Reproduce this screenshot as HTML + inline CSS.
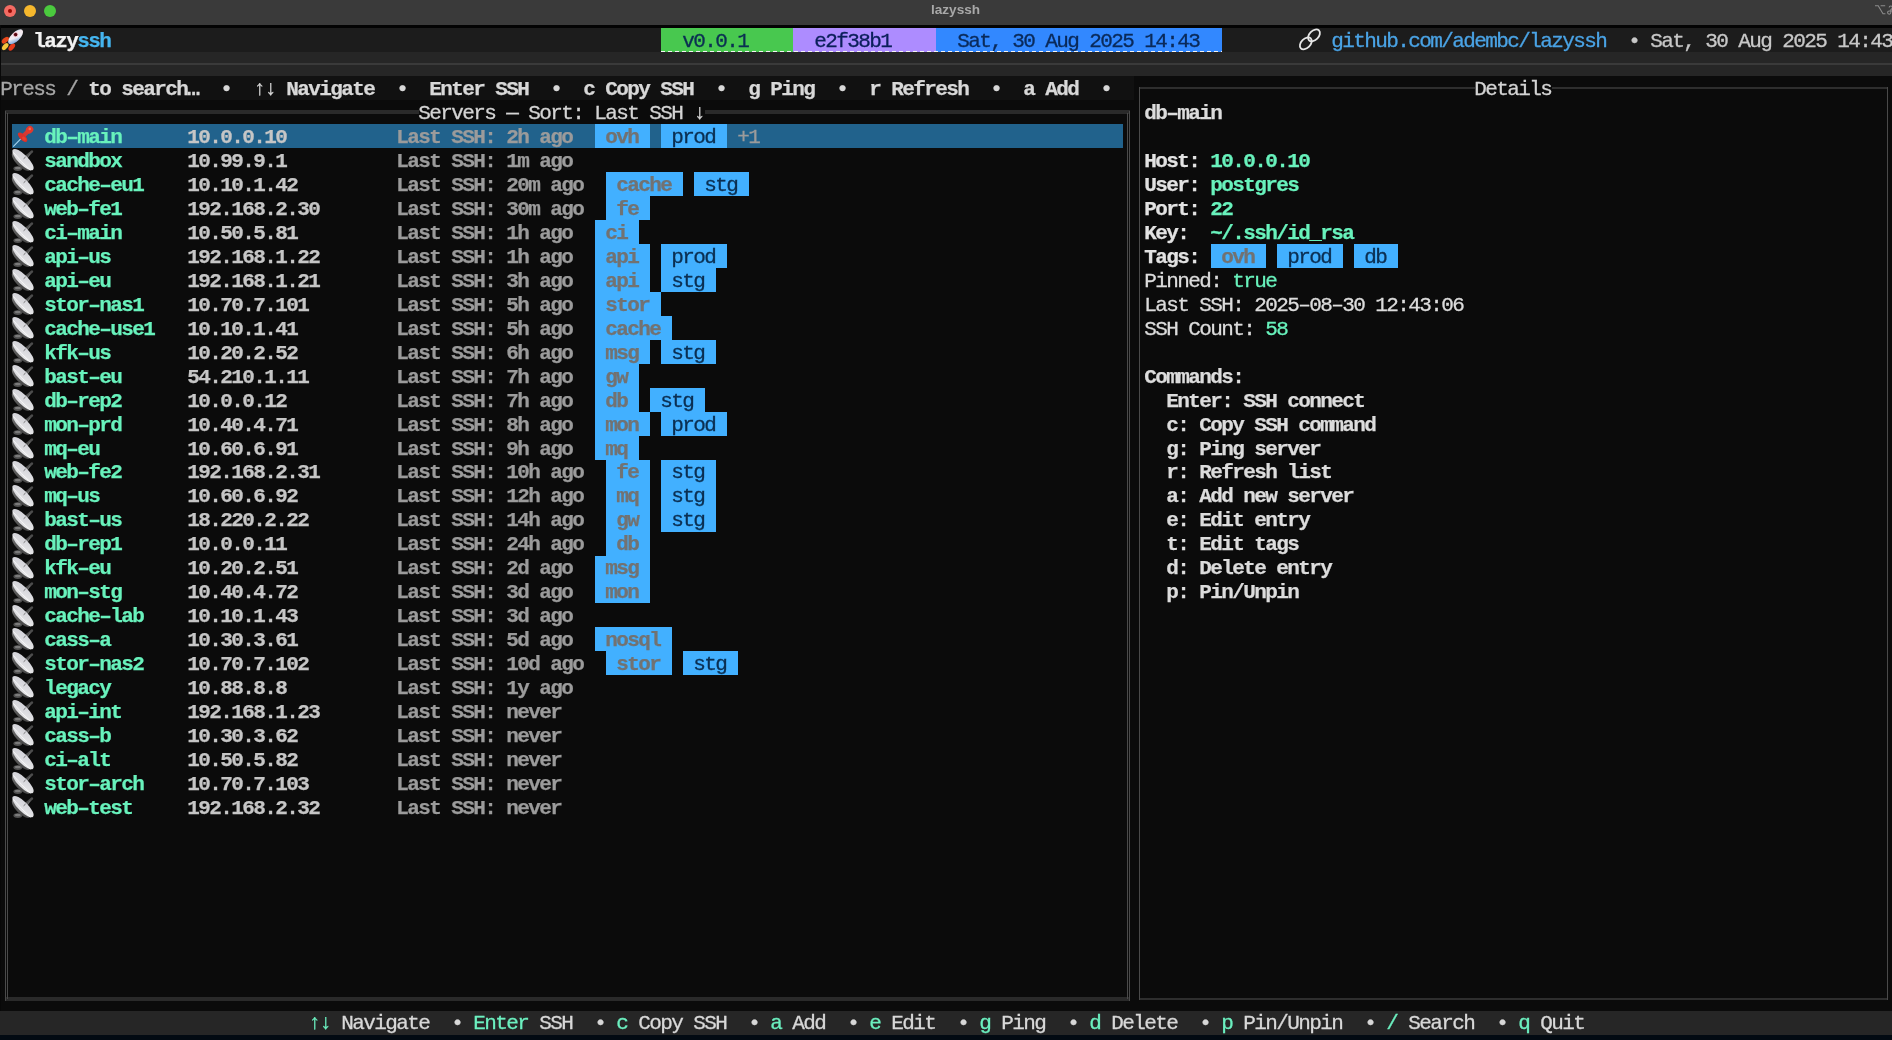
<!DOCTYPE html>
<html><head><meta charset="utf-8"><style>
html,body{margin:0;padding:0;}
body{width:1892px;height:1040px;background:#0b0b0b;position:relative;overflow:hidden;}
.b{position:absolute;}
.t{position:absolute;white-space:pre;font-family:"Liberation Mono",monospace;font-size:21px;line-height:24px;height:24px;letter-spacing:-1.6021px;-webkit-text-stroke:0.3px currentColor;}
.b7{font-weight:bold;-webkit-text-stroke:0.25px currentColor;}
.i{position:absolute;overflow:visible;}
.tl{position:absolute;top:5px;width:12px;height:12px;border-radius:6px;}
.ttl{position:absolute;left:9.5px;width:1892px;top:0.5px;text-align:center;font-family:"Liberation Sans",sans-serif;font-weight:bold;font-size:13.6px;line-height:18px;color:#a8a8a8;}
</style></head><body><div id="w" style="position:absolute;left:0;top:0;width:1892px;height:1040px;overflow:hidden;will-change:transform">
<div class="b" style="left:0.00px;top:0.00px;width:1892.00px;height:25.00px;background:#3a3a3a;"></div>
<div class="b" style="left:0.00px;top:25.00px;width:1892.00px;height:3.00px;background:#030303;"></div>
<div class="tl" style="left:4px;background:#f46b63"><i style="position:absolute;left:4px;top:4px;width:4px;height:4px;border-radius:2px;background:#990800"></i></div>
<div class="tl" style="left:24px;background:#f6b82d"></div>
<div class="tl" style="left:44px;background:#4bca3e"></div>
<div class="ttl">lazyssh</div>
<svg class="i" style="left:1874.00px;top:4.00px" width="18" height="12" viewBox="0 0 18 12"><path d="M1 1.8h3.2l4.8 8h2.4M6.6 1.8h4.6" stroke="#8c8c8c" stroke-width="1.1" fill="none"/><path d="M15.2 3.6a1.6 1.6 0 1 1 1.6 1.6h3M16.8 5.2v3.4a1.6 1.6 0 1 1 -1.6 -1.6h3" stroke="#8c8c8c" stroke-width="1.1" fill="none"/></svg>
<div class="b" style="left:0.00px;top:28.10px;width:1892.00px;height:23.98px;background:#1c1c1c;"></div>
<svg class="i" style="left:0.00px;top:29.10px" width="23" height="23" viewBox="0 0 23 23"><defs><linearGradient id="rb" x1="0" y1="1" x2="1" y2="0"><stop offset="0" stop-color="#3f82d0"/><stop offset="0.45" stop-color="#f2eef4"/><stop offset="0.75" stop-color="#f6e8ee"/><stop offset="1" stop-color="#98d2f2"/></linearGradient></defs><ellipse cx="5.3" cy="11.2" rx="4.2" ry="2.4" transform="rotate(-40 5.3 11.2)" fill="#e8481c"/><ellipse cx="11.8" cy="18" rx="4.2" ry="2.4" transform="rotate(-50 11.8 18)" fill="#e63a1a"/><ellipse cx="5.2" cy="17.6" rx="4.2" ry="2.3" transform="rotate(-50 5.2 17.6)" fill="#f6c63c"/><ellipse cx="15.6" cy="7.8" rx="9.6" ry="4.4" transform="rotate(-45 15.6 7.8)" fill="url(#rb)"/><circle cx="15.6" cy="5.6" r="2.2" fill="#5a0810" stroke="#f4c8d4" stroke-width="0.9"/></svg>
<div class="t b7" style="left:33.20px;top:30.45px;color:#f2f2f2;">lazy</div>
<div class="t b7" style="left:77.20px;top:30.45px;color:#45b5ef;">ssh</div>
<div class="b" style="left:661.00px;top:28.10px;width:132.00px;height:23.98px;background:#48c84f;"></div>
<div class="b" style="left:793.00px;top:28.10px;width:143.00px;height:23.98px;background:#ad8cff;"></div>
<div class="b" style="left:936.00px;top:28.10px;width:286.00px;height:23.98px;background:#3288ff;"></div>
<div class="t" style="left:682.20px;top:30.45px;color:#0b2f52;">v0.0.1</div>
<div class="t" style="left:814.20px;top:30.45px;color:#0b1f5a;">e2f38b1</div>
<div class="t" style="left:957.20px;top:30.45px;color:#0a2a5a;">Sat, 30 Aug 2025 14:43</div>
<div class="b" style="left:661.00px;top:50.70px;width:561.00px;height:1.20px;background:repeating-linear-gradient(90deg,#f4f4f4 0 4px,transparent 4px 7px);"></div>
<svg class="i" style="left:1299.00px;top:28.10px" width="22" height="24" viewBox="0 0 22 24"><g fill="none" stroke="#e6e6e6" stroke-width="1.8"><ellipse cx="15" cy="7.4" rx="7" ry="4.6" transform="rotate(-45 15 7.4)"/><ellipse cx="6.8" cy="15.4" rx="7" ry="4.6" transform="rotate(-45 6.8 15.4)"/></g></svg>
<div class="t" style="left:1331.20px;top:30.45px;color:#4aa3e5;">github.com/adembc/lazyssh</div>
<div class="t" style="left:1628.20px;top:30.45px;color:#c8c8c8;">•</div>
<div class="t" style="left:1650.20px;top:30.45px;color:#c8c8c8;">Sat, 30 Aug 2025 14:43</div>
<div class="b" style="left:0.00px;top:52.08px;width:1892.00px;height:23.98px;background:#262626;"></div>
<div class="b" style="left:0.00px;top:62.98px;width:1892.00px;height:2.00px;background:#3a3a3a;"></div>
<div class="b" style="left:1.00px;top:76.05px;width:1133.00px;height:23.98px;background:#111111;"></div>
<div class="t" style="left:0.20px;top:78.34px;color:#a6a6a6;">Press / </div>
<div class="t b7" style="left:88.20px;top:78.34px;color:#d8d8d8;">to search…</div>
<div class="t b7" style="left:220.20px;top:78.34px;color:#d8d8d8;">•</div>
<div class="t b7" style="left:253.20px;top:78.34px;color:#d8d8d8;">↑↓ Navigate</div>
<div class="t b7" style="left:396.20px;top:78.34px;color:#d8d8d8;">•</div>
<div class="t b7" style="left:429.20px;top:78.34px;color:#d8d8d8;">Enter SSH</div>
<div class="t b7" style="left:550.20px;top:78.34px;color:#d8d8d8;">•</div>
<div class="t b7" style="left:583.20px;top:78.34px;color:#d8d8d8;">c Copy SSH</div>
<div class="t b7" style="left:715.20px;top:78.34px;color:#d8d8d8;">•</div>
<div class="t b7" style="left:748.20px;top:78.34px;color:#d8d8d8;">g Ping</div>
<div class="t b7" style="left:836.20px;top:78.34px;color:#d8d8d8;">•</div>
<div class="t b7" style="left:869.20px;top:78.34px;color:#d8d8d8;">r Refresh</div>
<div class="t b7" style="left:990.20px;top:78.34px;color:#d8d8d8;">•</div>
<div class="t b7" style="left:1023.20px;top:78.34px;color:#d8d8d8;">a Add</div>
<div class="t b7" style="left:1100.20px;top:78.34px;color:#d8d8d8;">•</div>
<div class="b" style="left:5.00px;top:110.01px;width:1125.00px;height:4.00px;background:#2a2a2a;"></div>
<div class="b" style="left:5.00px;top:997.09px;width:1125.00px;height:4.00px;background:#2a2a2a;"></div>
<div class="b" style="left:5.00px;top:110.51px;width:1.20px;height:890.07px;background:#4a4a4a;"></div>
<div class="b" style="left:7.10px;top:112.51px;width:1.20px;height:886.07px;background:#4a4a4a;"></div>
<div class="b" style="left:1126.80px;top:112.51px;width:1.20px;height:886.07px;background:#4a4a4a;"></div>
<div class="b" style="left:1128.90px;top:110.51px;width:1.20px;height:890.07px;background:#4a4a4a;"></div>
<div class="b" style="left:419.00px;top:100.03px;width:286.00px;height:23.98px;background:#0b0b0b;"></div>
<div class="t" style="left:418.20px;top:102.29px;color:#d4d4d4;">Servers — Sort: Last SSH ↓</div>
<div class="b" style="left:1138.70px;top:87.04px;width:749.60px;height:2.00px;background:#2e2e2e;"></div>
<div class="b" style="left:1138.70px;top:998.09px;width:749.60px;height:2.00px;background:#2e2e2e;"></div>
<div class="b" style="left:1138.70px;top:87.04px;width:1.60px;height:913.05px;background:#4a4a4a;"></div>
<div class="b" style="left:1886.70px;top:87.04px;width:1.60px;height:913.05px;background:#4a4a4a;"></div>
<div class="b" style="left:1475.00px;top:76.05px;width:77.00px;height:23.98px;background:#0b0b0b;"></div>
<div class="t" style="left:1474.20px;top:78.34px;color:#d4d4d4;">Details</div>
<div class="b" style="left:12.00px;top:124.00px;width:1111.00px;height:23.98px;background:#21628c;"></div>
<svg class="i" style="left:12.00px;top:124.00px" width="22" height="24" viewBox="0 0 22 24"><path d="M9.2 14.3 L1.2 22.6" stroke="#a8d6f2" stroke-width="1.1" fill="none"/><path d="M11.5 11.8 L16 7.3" stroke="#d23a34" stroke-width="4.2" stroke-linecap="round"/><ellipse cx="10.6" cy="13.2" rx="6.1" ry="2.8" transform="rotate(45 10.6 13.2)" fill="#d8302a"/><ellipse cx="17.6" cy="5.7" rx="3.9" ry="3.5" transform="rotate(-45 17.6 5.7)" fill="#e2382c"/><circle cx="17.8" cy="4.9" r="1.3" fill="#ff6e50" opacity="0.9"/><ellipse cx="12" cy="14.6" rx="2.4" ry="1.5" transform="rotate(45 12 14.6)" fill="#e8402c"/></svg>
<div class="t b7" style="left:44.20px;top:126.23px;color:#68f2bc;">db–main</div>
<div class="t b7" style="left:187.20px;top:126.23px;color:#c6c6c6;">10.0.0.10</div>
<div class="t b7" style="left:396.20px;top:126.23px;color:#9b9b9b;">Last SSH: 2h ago</div>
<div class="b" style="left:595.00px;top:124.00px;width:55.00px;height:23.98px;background:#42b0ff;"></div>
<div class="t b7" style="left:605.20px;top:126.23px;color:#727272;">ovh</div>
<div class="b" style="left:661.00px;top:124.00px;width:66.00px;height:23.98px;background:#42b0ff;"></div>
<div class="t" style="left:671.20px;top:126.23px;color:#0b2f52;">prod</div>
<div class="t" style="left:737.20px;top:126.23px;color:#9b9b9b;">+1</div>
<svg class="i" style="left:12.00px;top:147.97px" width="22" height="24" viewBox="0 0 22 24"><defs><linearGradient id="dg" x1="0" y1="0" x2="1" y2="1"><stop offset="0" stop-color="#cfcfd6"/><stop offset="0.5" stop-color="#dcdce0"/><stop offset="1" stop-color="#ececec"/></linearGradient><linearGradient id="db" x1="0" y1="0" x2="1" y2="1"><stop offset="0" stop-color="#8a8a8a"/><stop offset="1" stop-color="#3a3a3a"/></linearGradient></defs><g transform="translate(-1 0)"><ellipse cx="6.8" cy="20.6" rx="4.4" ry="2.3" fill="#505050"/><ellipse cx="6.8" cy="20" rx="3" ry="1.2" fill="#7a7a7a"/><path d="M14 9.5 L21 3.5" stroke="#4c4c4c" stroke-width="2.4" stroke-linecap="round"/><path d="M15.5 11 L19 6" stroke="#6a6a6a" stroke-width="1.2" stroke-linecap="round"/><ellipse cx="10.5" cy="13.3" rx="12.5" ry="5.4" transform="rotate(45 10.5 13.3)" fill="url(#db)"/><ellipse cx="12" cy="11.6" rx="14.2" ry="4.9" transform="rotate(45 12 11.6)" fill="url(#dg)"/><path d="M2.2 4.2 Q10 13.5 19.5 22.3" stroke="#fafafa" stroke-width="1" fill="none" opacity="0.85"/><path d="M12.6 10.8 L14.6 9" stroke="#555" stroke-width="1" opacity="0.8"/></g></svg>
<div class="t b7" style="left:44.20px;top:150.17px;color:#68f2bc;">sandbox</div>
<div class="t b7" style="left:187.20px;top:150.17px;color:#c6c6c6;">10.99.9.1</div>
<div class="t b7" style="left:396.20px;top:150.17px;color:#9b9b9b;">Last SSH: 1m ago</div>
<svg class="i" style="left:12.00px;top:171.95px" width="22" height="24" viewBox="0 0 22 24"><defs><linearGradient id="dg" x1="0" y1="0" x2="1" y2="1"><stop offset="0" stop-color="#cfcfd6"/><stop offset="0.5" stop-color="#dcdce0"/><stop offset="1" stop-color="#ececec"/></linearGradient><linearGradient id="db" x1="0" y1="0" x2="1" y2="1"><stop offset="0" stop-color="#8a8a8a"/><stop offset="1" stop-color="#3a3a3a"/></linearGradient></defs><g transform="translate(-1 0)"><ellipse cx="6.8" cy="20.6" rx="4.4" ry="2.3" fill="#505050"/><ellipse cx="6.8" cy="20" rx="3" ry="1.2" fill="#7a7a7a"/><path d="M14 9.5 L21 3.5" stroke="#4c4c4c" stroke-width="2.4" stroke-linecap="round"/><path d="M15.5 11 L19 6" stroke="#6a6a6a" stroke-width="1.2" stroke-linecap="round"/><ellipse cx="10.5" cy="13.3" rx="12.5" ry="5.4" transform="rotate(45 10.5 13.3)" fill="url(#db)"/><ellipse cx="12" cy="11.6" rx="14.2" ry="4.9" transform="rotate(45 12 11.6)" fill="url(#dg)"/><path d="M2.2 4.2 Q10 13.5 19.5 22.3" stroke="#fafafa" stroke-width="1" fill="none" opacity="0.85"/><path d="M12.6 10.8 L14.6 9" stroke="#555" stroke-width="1" opacity="0.8"/></g></svg>
<div class="t b7" style="left:44.20px;top:174.12px;color:#68f2bc;">cache–eu1</div>
<div class="t b7" style="left:187.20px;top:174.12px;color:#c6c6c6;">10.10.1.42</div>
<div class="t b7" style="left:396.20px;top:174.12px;color:#9b9b9b;">Last SSH: 20m ago</div>
<div class="b" style="left:606.00px;top:171.95px;width:77.00px;height:23.98px;background:#42b0ff;"></div>
<div class="t b7" style="left:616.20px;top:174.12px;color:#727272;">cache</div>
<div class="b" style="left:694.00px;top:171.95px;width:55.00px;height:23.98px;background:#42b0ff;"></div>
<div class="t" style="left:704.20px;top:174.12px;color:#0b2f52;">stg</div>
<svg class="i" style="left:12.00px;top:195.93px" width="22" height="24" viewBox="0 0 22 24"><defs><linearGradient id="dg" x1="0" y1="0" x2="1" y2="1"><stop offset="0" stop-color="#cfcfd6"/><stop offset="0.5" stop-color="#dcdce0"/><stop offset="1" stop-color="#ececec"/></linearGradient><linearGradient id="db" x1="0" y1="0" x2="1" y2="1"><stop offset="0" stop-color="#8a8a8a"/><stop offset="1" stop-color="#3a3a3a"/></linearGradient></defs><g transform="translate(-1 0)"><ellipse cx="6.8" cy="20.6" rx="4.4" ry="2.3" fill="#505050"/><ellipse cx="6.8" cy="20" rx="3" ry="1.2" fill="#7a7a7a"/><path d="M14 9.5 L21 3.5" stroke="#4c4c4c" stroke-width="2.4" stroke-linecap="round"/><path d="M15.5 11 L19 6" stroke="#6a6a6a" stroke-width="1.2" stroke-linecap="round"/><ellipse cx="10.5" cy="13.3" rx="12.5" ry="5.4" transform="rotate(45 10.5 13.3)" fill="url(#db)"/><ellipse cx="12" cy="11.6" rx="14.2" ry="4.9" transform="rotate(45 12 11.6)" fill="url(#dg)"/><path d="M2.2 4.2 Q10 13.5 19.5 22.3" stroke="#fafafa" stroke-width="1" fill="none" opacity="0.85"/><path d="M12.6 10.8 L14.6 9" stroke="#555" stroke-width="1" opacity="0.8"/></g></svg>
<div class="t b7" style="left:44.20px;top:198.06px;color:#68f2bc;">web–fe1</div>
<div class="t b7" style="left:187.20px;top:198.06px;color:#c6c6c6;">192.168.2.30</div>
<div class="t b7" style="left:396.20px;top:198.06px;color:#9b9b9b;">Last SSH: 30m ago</div>
<div class="b" style="left:606.00px;top:195.93px;width:44.00px;height:23.98px;background:#42b0ff;"></div>
<div class="t b7" style="left:616.20px;top:198.06px;color:#727272;">fe</div>
<svg class="i" style="left:12.00px;top:219.90px" width="22" height="24" viewBox="0 0 22 24"><defs><linearGradient id="dg" x1="0" y1="0" x2="1" y2="1"><stop offset="0" stop-color="#cfcfd6"/><stop offset="0.5" stop-color="#dcdce0"/><stop offset="1" stop-color="#ececec"/></linearGradient><linearGradient id="db" x1="0" y1="0" x2="1" y2="1"><stop offset="0" stop-color="#8a8a8a"/><stop offset="1" stop-color="#3a3a3a"/></linearGradient></defs><g transform="translate(-1 0)"><ellipse cx="6.8" cy="20.6" rx="4.4" ry="2.3" fill="#505050"/><ellipse cx="6.8" cy="20" rx="3" ry="1.2" fill="#7a7a7a"/><path d="M14 9.5 L21 3.5" stroke="#4c4c4c" stroke-width="2.4" stroke-linecap="round"/><path d="M15.5 11 L19 6" stroke="#6a6a6a" stroke-width="1.2" stroke-linecap="round"/><ellipse cx="10.5" cy="13.3" rx="12.5" ry="5.4" transform="rotate(45 10.5 13.3)" fill="url(#db)"/><ellipse cx="12" cy="11.6" rx="14.2" ry="4.9" transform="rotate(45 12 11.6)" fill="url(#dg)"/><path d="M2.2 4.2 Q10 13.5 19.5 22.3" stroke="#fafafa" stroke-width="1" fill="none" opacity="0.85"/><path d="M12.6 10.8 L14.6 9" stroke="#555" stroke-width="1" opacity="0.8"/></g></svg>
<div class="t b7" style="left:44.20px;top:222.01px;color:#68f2bc;">ci–main</div>
<div class="t b7" style="left:187.20px;top:222.01px;color:#c6c6c6;">10.50.5.81</div>
<div class="t b7" style="left:396.20px;top:222.01px;color:#9b9b9b;">Last SSH: 1h ago</div>
<div class="b" style="left:595.00px;top:219.90px;width:44.00px;height:23.98px;background:#42b0ff;"></div>
<div class="t b7" style="left:605.20px;top:222.01px;color:#727272;">ci</div>
<svg class="i" style="left:12.00px;top:243.88px" width="22" height="24" viewBox="0 0 22 24"><defs><linearGradient id="dg" x1="0" y1="0" x2="1" y2="1"><stop offset="0" stop-color="#cfcfd6"/><stop offset="0.5" stop-color="#dcdce0"/><stop offset="1" stop-color="#ececec"/></linearGradient><linearGradient id="db" x1="0" y1="0" x2="1" y2="1"><stop offset="0" stop-color="#8a8a8a"/><stop offset="1" stop-color="#3a3a3a"/></linearGradient></defs><g transform="translate(-1 0)"><ellipse cx="6.8" cy="20.6" rx="4.4" ry="2.3" fill="#505050"/><ellipse cx="6.8" cy="20" rx="3" ry="1.2" fill="#7a7a7a"/><path d="M14 9.5 L21 3.5" stroke="#4c4c4c" stroke-width="2.4" stroke-linecap="round"/><path d="M15.5 11 L19 6" stroke="#6a6a6a" stroke-width="1.2" stroke-linecap="round"/><ellipse cx="10.5" cy="13.3" rx="12.5" ry="5.4" transform="rotate(45 10.5 13.3)" fill="url(#db)"/><ellipse cx="12" cy="11.6" rx="14.2" ry="4.9" transform="rotate(45 12 11.6)" fill="url(#dg)"/><path d="M2.2 4.2 Q10 13.5 19.5 22.3" stroke="#fafafa" stroke-width="1" fill="none" opacity="0.85"/><path d="M12.6 10.8 L14.6 9" stroke="#555" stroke-width="1" opacity="0.8"/></g></svg>
<div class="t b7" style="left:44.20px;top:245.95px;color:#68f2bc;">api–us</div>
<div class="t b7" style="left:187.20px;top:245.95px;color:#c6c6c6;">192.168.1.22</div>
<div class="t b7" style="left:396.20px;top:245.95px;color:#9b9b9b;">Last SSH: 1h ago</div>
<div class="b" style="left:595.00px;top:243.88px;width:55.00px;height:23.98px;background:#42b0ff;"></div>
<div class="t b7" style="left:605.20px;top:245.95px;color:#727272;">api</div>
<div class="b" style="left:661.00px;top:243.88px;width:66.00px;height:23.98px;background:#42b0ff;"></div>
<div class="t" style="left:671.20px;top:245.95px;color:#0b2f52;">prod</div>
<svg class="i" style="left:12.00px;top:267.85px" width="22" height="24" viewBox="0 0 22 24"><defs><linearGradient id="dg" x1="0" y1="0" x2="1" y2="1"><stop offset="0" stop-color="#cfcfd6"/><stop offset="0.5" stop-color="#dcdce0"/><stop offset="1" stop-color="#ececec"/></linearGradient><linearGradient id="db" x1="0" y1="0" x2="1" y2="1"><stop offset="0" stop-color="#8a8a8a"/><stop offset="1" stop-color="#3a3a3a"/></linearGradient></defs><g transform="translate(-1 0)"><ellipse cx="6.8" cy="20.6" rx="4.4" ry="2.3" fill="#505050"/><ellipse cx="6.8" cy="20" rx="3" ry="1.2" fill="#7a7a7a"/><path d="M14 9.5 L21 3.5" stroke="#4c4c4c" stroke-width="2.4" stroke-linecap="round"/><path d="M15.5 11 L19 6" stroke="#6a6a6a" stroke-width="1.2" stroke-linecap="round"/><ellipse cx="10.5" cy="13.3" rx="12.5" ry="5.4" transform="rotate(45 10.5 13.3)" fill="url(#db)"/><ellipse cx="12" cy="11.6" rx="14.2" ry="4.9" transform="rotate(45 12 11.6)" fill="url(#dg)"/><path d="M2.2 4.2 Q10 13.5 19.5 22.3" stroke="#fafafa" stroke-width="1" fill="none" opacity="0.85"/><path d="M12.6 10.8 L14.6 9" stroke="#555" stroke-width="1" opacity="0.8"/></g></svg>
<div class="t b7" style="left:44.20px;top:269.90px;color:#68f2bc;">api–eu</div>
<div class="t b7" style="left:187.20px;top:269.90px;color:#c6c6c6;">192.168.1.21</div>
<div class="t b7" style="left:396.20px;top:269.90px;color:#9b9b9b;">Last SSH: 3h ago</div>
<div class="b" style="left:595.00px;top:267.85px;width:55.00px;height:23.98px;background:#42b0ff;"></div>
<div class="t b7" style="left:605.20px;top:269.90px;color:#727272;">api</div>
<div class="b" style="left:661.00px;top:267.85px;width:55.00px;height:23.98px;background:#42b0ff;"></div>
<div class="t" style="left:671.20px;top:269.90px;color:#0b2f52;">stg</div>
<svg class="i" style="left:12.00px;top:291.83px" width="22" height="24" viewBox="0 0 22 24"><defs><linearGradient id="dg" x1="0" y1="0" x2="1" y2="1"><stop offset="0" stop-color="#cfcfd6"/><stop offset="0.5" stop-color="#dcdce0"/><stop offset="1" stop-color="#ececec"/></linearGradient><linearGradient id="db" x1="0" y1="0" x2="1" y2="1"><stop offset="0" stop-color="#8a8a8a"/><stop offset="1" stop-color="#3a3a3a"/></linearGradient></defs><g transform="translate(-1 0)"><ellipse cx="6.8" cy="20.6" rx="4.4" ry="2.3" fill="#505050"/><ellipse cx="6.8" cy="20" rx="3" ry="1.2" fill="#7a7a7a"/><path d="M14 9.5 L21 3.5" stroke="#4c4c4c" stroke-width="2.4" stroke-linecap="round"/><path d="M15.5 11 L19 6" stroke="#6a6a6a" stroke-width="1.2" stroke-linecap="round"/><ellipse cx="10.5" cy="13.3" rx="12.5" ry="5.4" transform="rotate(45 10.5 13.3)" fill="url(#db)"/><ellipse cx="12" cy="11.6" rx="14.2" ry="4.9" transform="rotate(45 12 11.6)" fill="url(#dg)"/><path d="M2.2 4.2 Q10 13.5 19.5 22.3" stroke="#fafafa" stroke-width="1" fill="none" opacity="0.85"/><path d="M12.6 10.8 L14.6 9" stroke="#555" stroke-width="1" opacity="0.8"/></g></svg>
<div class="t b7" style="left:44.20px;top:293.85px;color:#68f2bc;">stor–nas1</div>
<div class="t b7" style="left:187.20px;top:293.85px;color:#c6c6c6;">10.70.7.101</div>
<div class="t b7" style="left:396.20px;top:293.85px;color:#9b9b9b;">Last SSH: 5h ago</div>
<div class="b" style="left:595.00px;top:291.83px;width:66.00px;height:23.98px;background:#42b0ff;"></div>
<div class="t b7" style="left:605.20px;top:293.85px;color:#727272;">stor</div>
<svg class="i" style="left:12.00px;top:315.80px" width="22" height="24" viewBox="0 0 22 24"><defs><linearGradient id="dg" x1="0" y1="0" x2="1" y2="1"><stop offset="0" stop-color="#cfcfd6"/><stop offset="0.5" stop-color="#dcdce0"/><stop offset="1" stop-color="#ececec"/></linearGradient><linearGradient id="db" x1="0" y1="0" x2="1" y2="1"><stop offset="0" stop-color="#8a8a8a"/><stop offset="1" stop-color="#3a3a3a"/></linearGradient></defs><g transform="translate(-1 0)"><ellipse cx="6.8" cy="20.6" rx="4.4" ry="2.3" fill="#505050"/><ellipse cx="6.8" cy="20" rx="3" ry="1.2" fill="#7a7a7a"/><path d="M14 9.5 L21 3.5" stroke="#4c4c4c" stroke-width="2.4" stroke-linecap="round"/><path d="M15.5 11 L19 6" stroke="#6a6a6a" stroke-width="1.2" stroke-linecap="round"/><ellipse cx="10.5" cy="13.3" rx="12.5" ry="5.4" transform="rotate(45 10.5 13.3)" fill="url(#db)"/><ellipse cx="12" cy="11.6" rx="14.2" ry="4.9" transform="rotate(45 12 11.6)" fill="url(#dg)"/><path d="M2.2 4.2 Q10 13.5 19.5 22.3" stroke="#fafafa" stroke-width="1" fill="none" opacity="0.85"/><path d="M12.6 10.8 L14.6 9" stroke="#555" stroke-width="1" opacity="0.8"/></g></svg>
<div class="t b7" style="left:44.20px;top:317.79px;color:#68f2bc;">cache–use1</div>
<div class="t b7" style="left:187.20px;top:317.79px;color:#c6c6c6;">10.10.1.41</div>
<div class="t b7" style="left:396.20px;top:317.79px;color:#9b9b9b;">Last SSH: 5h ago</div>
<div class="b" style="left:595.00px;top:315.80px;width:77.00px;height:23.98px;background:#42b0ff;"></div>
<div class="t b7" style="left:605.20px;top:317.79px;color:#727272;">cache</div>
<svg class="i" style="left:12.00px;top:339.78px" width="22" height="24" viewBox="0 0 22 24"><defs><linearGradient id="dg" x1="0" y1="0" x2="1" y2="1"><stop offset="0" stop-color="#cfcfd6"/><stop offset="0.5" stop-color="#dcdce0"/><stop offset="1" stop-color="#ececec"/></linearGradient><linearGradient id="db" x1="0" y1="0" x2="1" y2="1"><stop offset="0" stop-color="#8a8a8a"/><stop offset="1" stop-color="#3a3a3a"/></linearGradient></defs><g transform="translate(-1 0)"><ellipse cx="6.8" cy="20.6" rx="4.4" ry="2.3" fill="#505050"/><ellipse cx="6.8" cy="20" rx="3" ry="1.2" fill="#7a7a7a"/><path d="M14 9.5 L21 3.5" stroke="#4c4c4c" stroke-width="2.4" stroke-linecap="round"/><path d="M15.5 11 L19 6" stroke="#6a6a6a" stroke-width="1.2" stroke-linecap="round"/><ellipse cx="10.5" cy="13.3" rx="12.5" ry="5.4" transform="rotate(45 10.5 13.3)" fill="url(#db)"/><ellipse cx="12" cy="11.6" rx="14.2" ry="4.9" transform="rotate(45 12 11.6)" fill="url(#dg)"/><path d="M2.2 4.2 Q10 13.5 19.5 22.3" stroke="#fafafa" stroke-width="1" fill="none" opacity="0.85"/><path d="M12.6 10.8 L14.6 9" stroke="#555" stroke-width="1" opacity="0.8"/></g></svg>
<div class="t b7" style="left:44.20px;top:341.74px;color:#68f2bc;">kfk–us</div>
<div class="t b7" style="left:187.20px;top:341.74px;color:#c6c6c6;">10.20.2.52</div>
<div class="t b7" style="left:396.20px;top:341.74px;color:#9b9b9b;">Last SSH: 6h ago</div>
<div class="b" style="left:595.00px;top:339.78px;width:55.00px;height:23.98px;background:#42b0ff;"></div>
<div class="t b7" style="left:605.20px;top:341.74px;color:#727272;">msg</div>
<div class="b" style="left:661.00px;top:339.78px;width:55.00px;height:23.98px;background:#42b0ff;"></div>
<div class="t" style="left:671.20px;top:341.74px;color:#0b2f52;">stg</div>
<svg class="i" style="left:12.00px;top:363.75px" width="22" height="24" viewBox="0 0 22 24"><defs><linearGradient id="dg" x1="0" y1="0" x2="1" y2="1"><stop offset="0" stop-color="#cfcfd6"/><stop offset="0.5" stop-color="#dcdce0"/><stop offset="1" stop-color="#ececec"/></linearGradient><linearGradient id="db" x1="0" y1="0" x2="1" y2="1"><stop offset="0" stop-color="#8a8a8a"/><stop offset="1" stop-color="#3a3a3a"/></linearGradient></defs><g transform="translate(-1 0)"><ellipse cx="6.8" cy="20.6" rx="4.4" ry="2.3" fill="#505050"/><ellipse cx="6.8" cy="20" rx="3" ry="1.2" fill="#7a7a7a"/><path d="M14 9.5 L21 3.5" stroke="#4c4c4c" stroke-width="2.4" stroke-linecap="round"/><path d="M15.5 11 L19 6" stroke="#6a6a6a" stroke-width="1.2" stroke-linecap="round"/><ellipse cx="10.5" cy="13.3" rx="12.5" ry="5.4" transform="rotate(45 10.5 13.3)" fill="url(#db)"/><ellipse cx="12" cy="11.6" rx="14.2" ry="4.9" transform="rotate(45 12 11.6)" fill="url(#dg)"/><path d="M2.2 4.2 Q10 13.5 19.5 22.3" stroke="#fafafa" stroke-width="1" fill="none" opacity="0.85"/><path d="M12.6 10.8 L14.6 9" stroke="#555" stroke-width="1" opacity="0.8"/></g></svg>
<div class="t b7" style="left:44.20px;top:365.68px;color:#68f2bc;">bast–eu</div>
<div class="t b7" style="left:187.20px;top:365.68px;color:#c6c6c6;">54.210.1.11</div>
<div class="t b7" style="left:396.20px;top:365.68px;color:#9b9b9b;">Last SSH: 7h ago</div>
<div class="b" style="left:595.00px;top:363.75px;width:44.00px;height:23.98px;background:#42b0ff;"></div>
<div class="t b7" style="left:605.20px;top:365.68px;color:#727272;">gw</div>
<svg class="i" style="left:12.00px;top:387.73px" width="22" height="24" viewBox="0 0 22 24"><defs><linearGradient id="dg" x1="0" y1="0" x2="1" y2="1"><stop offset="0" stop-color="#cfcfd6"/><stop offset="0.5" stop-color="#dcdce0"/><stop offset="1" stop-color="#ececec"/></linearGradient><linearGradient id="db" x1="0" y1="0" x2="1" y2="1"><stop offset="0" stop-color="#8a8a8a"/><stop offset="1" stop-color="#3a3a3a"/></linearGradient></defs><g transform="translate(-1 0)"><ellipse cx="6.8" cy="20.6" rx="4.4" ry="2.3" fill="#505050"/><ellipse cx="6.8" cy="20" rx="3" ry="1.2" fill="#7a7a7a"/><path d="M14 9.5 L21 3.5" stroke="#4c4c4c" stroke-width="2.4" stroke-linecap="round"/><path d="M15.5 11 L19 6" stroke="#6a6a6a" stroke-width="1.2" stroke-linecap="round"/><ellipse cx="10.5" cy="13.3" rx="12.5" ry="5.4" transform="rotate(45 10.5 13.3)" fill="url(#db)"/><ellipse cx="12" cy="11.6" rx="14.2" ry="4.9" transform="rotate(45 12 11.6)" fill="url(#dg)"/><path d="M2.2 4.2 Q10 13.5 19.5 22.3" stroke="#fafafa" stroke-width="1" fill="none" opacity="0.85"/><path d="M12.6 10.8 L14.6 9" stroke="#555" stroke-width="1" opacity="0.8"/></g></svg>
<div class="t b7" style="left:44.20px;top:389.62px;color:#68f2bc;">db–rep2</div>
<div class="t b7" style="left:187.20px;top:389.62px;color:#c6c6c6;">10.0.0.12</div>
<div class="t b7" style="left:396.20px;top:389.62px;color:#9b9b9b;">Last SSH: 7h ago</div>
<div class="b" style="left:595.00px;top:387.73px;width:44.00px;height:23.98px;background:#42b0ff;"></div>
<div class="t b7" style="left:605.20px;top:389.62px;color:#727272;">db</div>
<div class="b" style="left:650.00px;top:387.73px;width:55.00px;height:23.98px;background:#42b0ff;"></div>
<div class="t" style="left:660.20px;top:389.62px;color:#0b2f52;">stg</div>
<svg class="i" style="left:12.00px;top:411.70px" width="22" height="24" viewBox="0 0 22 24"><defs><linearGradient id="dg" x1="0" y1="0" x2="1" y2="1"><stop offset="0" stop-color="#cfcfd6"/><stop offset="0.5" stop-color="#dcdce0"/><stop offset="1" stop-color="#ececec"/></linearGradient><linearGradient id="db" x1="0" y1="0" x2="1" y2="1"><stop offset="0" stop-color="#8a8a8a"/><stop offset="1" stop-color="#3a3a3a"/></linearGradient></defs><g transform="translate(-1 0)"><ellipse cx="6.8" cy="20.6" rx="4.4" ry="2.3" fill="#505050"/><ellipse cx="6.8" cy="20" rx="3" ry="1.2" fill="#7a7a7a"/><path d="M14 9.5 L21 3.5" stroke="#4c4c4c" stroke-width="2.4" stroke-linecap="round"/><path d="M15.5 11 L19 6" stroke="#6a6a6a" stroke-width="1.2" stroke-linecap="round"/><ellipse cx="10.5" cy="13.3" rx="12.5" ry="5.4" transform="rotate(45 10.5 13.3)" fill="url(#db)"/><ellipse cx="12" cy="11.6" rx="14.2" ry="4.9" transform="rotate(45 12 11.6)" fill="url(#dg)"/><path d="M2.2 4.2 Q10 13.5 19.5 22.3" stroke="#fafafa" stroke-width="1" fill="none" opacity="0.85"/><path d="M12.6 10.8 L14.6 9" stroke="#555" stroke-width="1" opacity="0.8"/></g></svg>
<div class="t b7" style="left:44.20px;top:413.57px;color:#68f2bc;">mon–prd</div>
<div class="t b7" style="left:187.20px;top:413.57px;color:#c6c6c6;">10.40.4.71</div>
<div class="t b7" style="left:396.20px;top:413.57px;color:#9b9b9b;">Last SSH: 8h ago</div>
<div class="b" style="left:595.00px;top:411.70px;width:55.00px;height:23.98px;background:#42b0ff;"></div>
<div class="t b7" style="left:605.20px;top:413.57px;color:#727272;">mon</div>
<div class="b" style="left:661.00px;top:411.70px;width:66.00px;height:23.98px;background:#42b0ff;"></div>
<div class="t" style="left:671.20px;top:413.57px;color:#0b2f52;">prod</div>
<svg class="i" style="left:12.00px;top:435.68px" width="22" height="24" viewBox="0 0 22 24"><defs><linearGradient id="dg" x1="0" y1="0" x2="1" y2="1"><stop offset="0" stop-color="#cfcfd6"/><stop offset="0.5" stop-color="#dcdce0"/><stop offset="1" stop-color="#ececec"/></linearGradient><linearGradient id="db" x1="0" y1="0" x2="1" y2="1"><stop offset="0" stop-color="#8a8a8a"/><stop offset="1" stop-color="#3a3a3a"/></linearGradient></defs><g transform="translate(-1 0)"><ellipse cx="6.8" cy="20.6" rx="4.4" ry="2.3" fill="#505050"/><ellipse cx="6.8" cy="20" rx="3" ry="1.2" fill="#7a7a7a"/><path d="M14 9.5 L21 3.5" stroke="#4c4c4c" stroke-width="2.4" stroke-linecap="round"/><path d="M15.5 11 L19 6" stroke="#6a6a6a" stroke-width="1.2" stroke-linecap="round"/><ellipse cx="10.5" cy="13.3" rx="12.5" ry="5.4" transform="rotate(45 10.5 13.3)" fill="url(#db)"/><ellipse cx="12" cy="11.6" rx="14.2" ry="4.9" transform="rotate(45 12 11.6)" fill="url(#dg)"/><path d="M2.2 4.2 Q10 13.5 19.5 22.3" stroke="#fafafa" stroke-width="1" fill="none" opacity="0.85"/><path d="M12.6 10.8 L14.6 9" stroke="#555" stroke-width="1" opacity="0.8"/></g></svg>
<div class="t b7" style="left:44.20px;top:437.52px;color:#68f2bc;">mq–eu</div>
<div class="t b7" style="left:187.20px;top:437.52px;color:#c6c6c6;">10.60.6.91</div>
<div class="t b7" style="left:396.20px;top:437.52px;color:#9b9b9b;">Last SSH: 9h ago</div>
<div class="b" style="left:595.00px;top:435.68px;width:44.00px;height:23.98px;background:#42b0ff;"></div>
<div class="t b7" style="left:605.20px;top:437.52px;color:#727272;">mq</div>
<svg class="i" style="left:12.00px;top:459.65px" width="22" height="24" viewBox="0 0 22 24"><defs><linearGradient id="dg" x1="0" y1="0" x2="1" y2="1"><stop offset="0" stop-color="#cfcfd6"/><stop offset="0.5" stop-color="#dcdce0"/><stop offset="1" stop-color="#ececec"/></linearGradient><linearGradient id="db" x1="0" y1="0" x2="1" y2="1"><stop offset="0" stop-color="#8a8a8a"/><stop offset="1" stop-color="#3a3a3a"/></linearGradient></defs><g transform="translate(-1 0)"><ellipse cx="6.8" cy="20.6" rx="4.4" ry="2.3" fill="#505050"/><ellipse cx="6.8" cy="20" rx="3" ry="1.2" fill="#7a7a7a"/><path d="M14 9.5 L21 3.5" stroke="#4c4c4c" stroke-width="2.4" stroke-linecap="round"/><path d="M15.5 11 L19 6" stroke="#6a6a6a" stroke-width="1.2" stroke-linecap="round"/><ellipse cx="10.5" cy="13.3" rx="12.5" ry="5.4" transform="rotate(45 10.5 13.3)" fill="url(#db)"/><ellipse cx="12" cy="11.6" rx="14.2" ry="4.9" transform="rotate(45 12 11.6)" fill="url(#dg)"/><path d="M2.2 4.2 Q10 13.5 19.5 22.3" stroke="#fafafa" stroke-width="1" fill="none" opacity="0.85"/><path d="M12.6 10.8 L14.6 9" stroke="#555" stroke-width="1" opacity="0.8"/></g></svg>
<div class="t b7" style="left:44.20px;top:461.46px;color:#68f2bc;">web–fe2</div>
<div class="t b7" style="left:187.20px;top:461.46px;color:#c6c6c6;">192.168.2.31</div>
<div class="t b7" style="left:396.20px;top:461.46px;color:#9b9b9b;">Last SSH: 10h ago</div>
<div class="b" style="left:606.00px;top:459.65px;width:44.00px;height:23.98px;background:#42b0ff;"></div>
<div class="t b7" style="left:616.20px;top:461.46px;color:#727272;">fe</div>
<div class="b" style="left:661.00px;top:459.65px;width:55.00px;height:23.98px;background:#42b0ff;"></div>
<div class="t" style="left:671.20px;top:461.46px;color:#0b2f52;">stg</div>
<svg class="i" style="left:12.00px;top:483.63px" width="22" height="24" viewBox="0 0 22 24"><defs><linearGradient id="dg" x1="0" y1="0" x2="1" y2="1"><stop offset="0" stop-color="#cfcfd6"/><stop offset="0.5" stop-color="#dcdce0"/><stop offset="1" stop-color="#ececec"/></linearGradient><linearGradient id="db" x1="0" y1="0" x2="1" y2="1"><stop offset="0" stop-color="#8a8a8a"/><stop offset="1" stop-color="#3a3a3a"/></linearGradient></defs><g transform="translate(-1 0)"><ellipse cx="6.8" cy="20.6" rx="4.4" ry="2.3" fill="#505050"/><ellipse cx="6.8" cy="20" rx="3" ry="1.2" fill="#7a7a7a"/><path d="M14 9.5 L21 3.5" stroke="#4c4c4c" stroke-width="2.4" stroke-linecap="round"/><path d="M15.5 11 L19 6" stroke="#6a6a6a" stroke-width="1.2" stroke-linecap="round"/><ellipse cx="10.5" cy="13.3" rx="12.5" ry="5.4" transform="rotate(45 10.5 13.3)" fill="url(#db)"/><ellipse cx="12" cy="11.6" rx="14.2" ry="4.9" transform="rotate(45 12 11.6)" fill="url(#dg)"/><path d="M2.2 4.2 Q10 13.5 19.5 22.3" stroke="#fafafa" stroke-width="1" fill="none" opacity="0.85"/><path d="M12.6 10.8 L14.6 9" stroke="#555" stroke-width="1" opacity="0.8"/></g></svg>
<div class="t b7" style="left:44.20px;top:485.41px;color:#68f2bc;">mq–us</div>
<div class="t b7" style="left:187.20px;top:485.41px;color:#c6c6c6;">10.60.6.92</div>
<div class="t b7" style="left:396.20px;top:485.41px;color:#9b9b9b;">Last SSH: 12h ago</div>
<div class="b" style="left:606.00px;top:483.63px;width:44.00px;height:23.98px;background:#42b0ff;"></div>
<div class="t b7" style="left:616.20px;top:485.41px;color:#727272;">mq</div>
<div class="b" style="left:661.00px;top:483.63px;width:55.00px;height:23.98px;background:#42b0ff;"></div>
<div class="t" style="left:671.20px;top:485.41px;color:#0b2f52;">stg</div>
<svg class="i" style="left:12.00px;top:507.60px" width="22" height="24" viewBox="0 0 22 24"><defs><linearGradient id="dg" x1="0" y1="0" x2="1" y2="1"><stop offset="0" stop-color="#cfcfd6"/><stop offset="0.5" stop-color="#dcdce0"/><stop offset="1" stop-color="#ececec"/></linearGradient><linearGradient id="db" x1="0" y1="0" x2="1" y2="1"><stop offset="0" stop-color="#8a8a8a"/><stop offset="1" stop-color="#3a3a3a"/></linearGradient></defs><g transform="translate(-1 0)"><ellipse cx="6.8" cy="20.6" rx="4.4" ry="2.3" fill="#505050"/><ellipse cx="6.8" cy="20" rx="3" ry="1.2" fill="#7a7a7a"/><path d="M14 9.5 L21 3.5" stroke="#4c4c4c" stroke-width="2.4" stroke-linecap="round"/><path d="M15.5 11 L19 6" stroke="#6a6a6a" stroke-width="1.2" stroke-linecap="round"/><ellipse cx="10.5" cy="13.3" rx="12.5" ry="5.4" transform="rotate(45 10.5 13.3)" fill="url(#db)"/><ellipse cx="12" cy="11.6" rx="14.2" ry="4.9" transform="rotate(45 12 11.6)" fill="url(#dg)"/><path d="M2.2 4.2 Q10 13.5 19.5 22.3" stroke="#fafafa" stroke-width="1" fill="none" opacity="0.85"/><path d="M12.6 10.8 L14.6 9" stroke="#555" stroke-width="1" opacity="0.8"/></g></svg>
<div class="t b7" style="left:44.20px;top:509.35px;color:#68f2bc;">bast–us</div>
<div class="t b7" style="left:187.20px;top:509.35px;color:#c6c6c6;">18.220.2.22</div>
<div class="t b7" style="left:396.20px;top:509.35px;color:#9b9b9b;">Last SSH: 14h ago</div>
<div class="b" style="left:606.00px;top:507.60px;width:44.00px;height:23.98px;background:#42b0ff;"></div>
<div class="t b7" style="left:616.20px;top:509.35px;color:#727272;">gw</div>
<div class="b" style="left:661.00px;top:507.60px;width:55.00px;height:23.98px;background:#42b0ff;"></div>
<div class="t" style="left:671.20px;top:509.35px;color:#0b2f52;">stg</div>
<svg class="i" style="left:12.00px;top:531.58px" width="22" height="24" viewBox="0 0 22 24"><defs><linearGradient id="dg" x1="0" y1="0" x2="1" y2="1"><stop offset="0" stop-color="#cfcfd6"/><stop offset="0.5" stop-color="#dcdce0"/><stop offset="1" stop-color="#ececec"/></linearGradient><linearGradient id="db" x1="0" y1="0" x2="1" y2="1"><stop offset="0" stop-color="#8a8a8a"/><stop offset="1" stop-color="#3a3a3a"/></linearGradient></defs><g transform="translate(-1 0)"><ellipse cx="6.8" cy="20.6" rx="4.4" ry="2.3" fill="#505050"/><ellipse cx="6.8" cy="20" rx="3" ry="1.2" fill="#7a7a7a"/><path d="M14 9.5 L21 3.5" stroke="#4c4c4c" stroke-width="2.4" stroke-linecap="round"/><path d="M15.5 11 L19 6" stroke="#6a6a6a" stroke-width="1.2" stroke-linecap="round"/><ellipse cx="10.5" cy="13.3" rx="12.5" ry="5.4" transform="rotate(45 10.5 13.3)" fill="url(#db)"/><ellipse cx="12" cy="11.6" rx="14.2" ry="4.9" transform="rotate(45 12 11.6)" fill="url(#dg)"/><path d="M2.2 4.2 Q10 13.5 19.5 22.3" stroke="#fafafa" stroke-width="1" fill="none" opacity="0.85"/><path d="M12.6 10.8 L14.6 9" stroke="#555" stroke-width="1" opacity="0.8"/></g></svg>
<div class="t b7" style="left:44.20px;top:533.30px;color:#68f2bc;">db–rep1</div>
<div class="t b7" style="left:187.20px;top:533.30px;color:#c6c6c6;">10.0.0.11</div>
<div class="t b7" style="left:396.20px;top:533.30px;color:#9b9b9b;">Last SSH: 24h ago</div>
<div class="b" style="left:606.00px;top:531.58px;width:44.00px;height:23.98px;background:#42b0ff;"></div>
<div class="t b7" style="left:616.20px;top:533.30px;color:#727272;">db</div>
<svg class="i" style="left:12.00px;top:555.55px" width="22" height="24" viewBox="0 0 22 24"><defs><linearGradient id="dg" x1="0" y1="0" x2="1" y2="1"><stop offset="0" stop-color="#cfcfd6"/><stop offset="0.5" stop-color="#dcdce0"/><stop offset="1" stop-color="#ececec"/></linearGradient><linearGradient id="db" x1="0" y1="0" x2="1" y2="1"><stop offset="0" stop-color="#8a8a8a"/><stop offset="1" stop-color="#3a3a3a"/></linearGradient></defs><g transform="translate(-1 0)"><ellipse cx="6.8" cy="20.6" rx="4.4" ry="2.3" fill="#505050"/><ellipse cx="6.8" cy="20" rx="3" ry="1.2" fill="#7a7a7a"/><path d="M14 9.5 L21 3.5" stroke="#4c4c4c" stroke-width="2.4" stroke-linecap="round"/><path d="M15.5 11 L19 6" stroke="#6a6a6a" stroke-width="1.2" stroke-linecap="round"/><ellipse cx="10.5" cy="13.3" rx="12.5" ry="5.4" transform="rotate(45 10.5 13.3)" fill="url(#db)"/><ellipse cx="12" cy="11.6" rx="14.2" ry="4.9" transform="rotate(45 12 11.6)" fill="url(#dg)"/><path d="M2.2 4.2 Q10 13.5 19.5 22.3" stroke="#fafafa" stroke-width="1" fill="none" opacity="0.85"/><path d="M12.6 10.8 L14.6 9" stroke="#555" stroke-width="1" opacity="0.8"/></g></svg>
<div class="t b7" style="left:44.20px;top:557.24px;color:#68f2bc;">kfk–eu</div>
<div class="t b7" style="left:187.20px;top:557.24px;color:#c6c6c6;">10.20.2.51</div>
<div class="t b7" style="left:396.20px;top:557.24px;color:#9b9b9b;">Last SSH: 2d ago</div>
<div class="b" style="left:595.00px;top:555.55px;width:55.00px;height:23.98px;background:#42b0ff;"></div>
<div class="t b7" style="left:605.20px;top:557.24px;color:#727272;">msg</div>
<svg class="i" style="left:12.00px;top:579.53px" width="22" height="24" viewBox="0 0 22 24"><defs><linearGradient id="dg" x1="0" y1="0" x2="1" y2="1"><stop offset="0" stop-color="#cfcfd6"/><stop offset="0.5" stop-color="#dcdce0"/><stop offset="1" stop-color="#ececec"/></linearGradient><linearGradient id="db" x1="0" y1="0" x2="1" y2="1"><stop offset="0" stop-color="#8a8a8a"/><stop offset="1" stop-color="#3a3a3a"/></linearGradient></defs><g transform="translate(-1 0)"><ellipse cx="6.8" cy="20.6" rx="4.4" ry="2.3" fill="#505050"/><ellipse cx="6.8" cy="20" rx="3" ry="1.2" fill="#7a7a7a"/><path d="M14 9.5 L21 3.5" stroke="#4c4c4c" stroke-width="2.4" stroke-linecap="round"/><path d="M15.5 11 L19 6" stroke="#6a6a6a" stroke-width="1.2" stroke-linecap="round"/><ellipse cx="10.5" cy="13.3" rx="12.5" ry="5.4" transform="rotate(45 10.5 13.3)" fill="url(#db)"/><ellipse cx="12" cy="11.6" rx="14.2" ry="4.9" transform="rotate(45 12 11.6)" fill="url(#dg)"/><path d="M2.2 4.2 Q10 13.5 19.5 22.3" stroke="#fafafa" stroke-width="1" fill="none" opacity="0.85"/><path d="M12.6 10.8 L14.6 9" stroke="#555" stroke-width="1" opacity="0.8"/></g></svg>
<div class="t b7" style="left:44.20px;top:581.19px;color:#68f2bc;">mon–stg</div>
<div class="t b7" style="left:187.20px;top:581.19px;color:#c6c6c6;">10.40.4.72</div>
<div class="t b7" style="left:396.20px;top:581.19px;color:#9b9b9b;">Last SSH: 3d ago</div>
<div class="b" style="left:595.00px;top:579.53px;width:55.00px;height:23.98px;background:#42b0ff;"></div>
<div class="t b7" style="left:605.20px;top:581.19px;color:#727272;">mon</div>
<svg class="i" style="left:12.00px;top:603.50px" width="22" height="24" viewBox="0 0 22 24"><defs><linearGradient id="dg" x1="0" y1="0" x2="1" y2="1"><stop offset="0" stop-color="#cfcfd6"/><stop offset="0.5" stop-color="#dcdce0"/><stop offset="1" stop-color="#ececec"/></linearGradient><linearGradient id="db" x1="0" y1="0" x2="1" y2="1"><stop offset="0" stop-color="#8a8a8a"/><stop offset="1" stop-color="#3a3a3a"/></linearGradient></defs><g transform="translate(-1 0)"><ellipse cx="6.8" cy="20.6" rx="4.4" ry="2.3" fill="#505050"/><ellipse cx="6.8" cy="20" rx="3" ry="1.2" fill="#7a7a7a"/><path d="M14 9.5 L21 3.5" stroke="#4c4c4c" stroke-width="2.4" stroke-linecap="round"/><path d="M15.5 11 L19 6" stroke="#6a6a6a" stroke-width="1.2" stroke-linecap="round"/><ellipse cx="10.5" cy="13.3" rx="12.5" ry="5.4" transform="rotate(45 10.5 13.3)" fill="url(#db)"/><ellipse cx="12" cy="11.6" rx="14.2" ry="4.9" transform="rotate(45 12 11.6)" fill="url(#dg)"/><path d="M2.2 4.2 Q10 13.5 19.5 22.3" stroke="#fafafa" stroke-width="1" fill="none" opacity="0.85"/><path d="M12.6 10.8 L14.6 9" stroke="#555" stroke-width="1" opacity="0.8"/></g></svg>
<div class="t b7" style="left:44.20px;top:605.13px;color:#68f2bc;">cache–lab</div>
<div class="t b7" style="left:187.20px;top:605.13px;color:#c6c6c6;">10.10.1.43</div>
<div class="t b7" style="left:396.20px;top:605.13px;color:#9b9b9b;">Last SSH: 3d ago</div>
<svg class="i" style="left:12.00px;top:627.48px" width="22" height="24" viewBox="0 0 22 24"><defs><linearGradient id="dg" x1="0" y1="0" x2="1" y2="1"><stop offset="0" stop-color="#cfcfd6"/><stop offset="0.5" stop-color="#dcdce0"/><stop offset="1" stop-color="#ececec"/></linearGradient><linearGradient id="db" x1="0" y1="0" x2="1" y2="1"><stop offset="0" stop-color="#8a8a8a"/><stop offset="1" stop-color="#3a3a3a"/></linearGradient></defs><g transform="translate(-1 0)"><ellipse cx="6.8" cy="20.6" rx="4.4" ry="2.3" fill="#505050"/><ellipse cx="6.8" cy="20" rx="3" ry="1.2" fill="#7a7a7a"/><path d="M14 9.5 L21 3.5" stroke="#4c4c4c" stroke-width="2.4" stroke-linecap="round"/><path d="M15.5 11 L19 6" stroke="#6a6a6a" stroke-width="1.2" stroke-linecap="round"/><ellipse cx="10.5" cy="13.3" rx="12.5" ry="5.4" transform="rotate(45 10.5 13.3)" fill="url(#db)"/><ellipse cx="12" cy="11.6" rx="14.2" ry="4.9" transform="rotate(45 12 11.6)" fill="url(#dg)"/><path d="M2.2 4.2 Q10 13.5 19.5 22.3" stroke="#fafafa" stroke-width="1" fill="none" opacity="0.85"/><path d="M12.6 10.8 L14.6 9" stroke="#555" stroke-width="1" opacity="0.8"/></g></svg>
<div class="t b7" style="left:44.20px;top:629.08px;color:#68f2bc;">cass–a</div>
<div class="t b7" style="left:187.20px;top:629.08px;color:#c6c6c6;">10.30.3.61</div>
<div class="t b7" style="left:396.20px;top:629.08px;color:#9b9b9b;">Last SSH: 5d ago</div>
<div class="b" style="left:595.00px;top:627.48px;width:77.00px;height:23.98px;background:#42b0ff;"></div>
<div class="t b7" style="left:605.20px;top:629.08px;color:#727272;">nosql</div>
<svg class="i" style="left:12.00px;top:651.45px" width="22" height="24" viewBox="0 0 22 24"><defs><linearGradient id="dg" x1="0" y1="0" x2="1" y2="1"><stop offset="0" stop-color="#cfcfd6"/><stop offset="0.5" stop-color="#dcdce0"/><stop offset="1" stop-color="#ececec"/></linearGradient><linearGradient id="db" x1="0" y1="0" x2="1" y2="1"><stop offset="0" stop-color="#8a8a8a"/><stop offset="1" stop-color="#3a3a3a"/></linearGradient></defs><g transform="translate(-1 0)"><ellipse cx="6.8" cy="20.6" rx="4.4" ry="2.3" fill="#505050"/><ellipse cx="6.8" cy="20" rx="3" ry="1.2" fill="#7a7a7a"/><path d="M14 9.5 L21 3.5" stroke="#4c4c4c" stroke-width="2.4" stroke-linecap="round"/><path d="M15.5 11 L19 6" stroke="#6a6a6a" stroke-width="1.2" stroke-linecap="round"/><ellipse cx="10.5" cy="13.3" rx="12.5" ry="5.4" transform="rotate(45 10.5 13.3)" fill="url(#db)"/><ellipse cx="12" cy="11.6" rx="14.2" ry="4.9" transform="rotate(45 12 11.6)" fill="url(#dg)"/><path d="M2.2 4.2 Q10 13.5 19.5 22.3" stroke="#fafafa" stroke-width="1" fill="none" opacity="0.85"/><path d="M12.6 10.8 L14.6 9" stroke="#555" stroke-width="1" opacity="0.8"/></g></svg>
<div class="t b7" style="left:44.20px;top:653.02px;color:#68f2bc;">stor–nas2</div>
<div class="t b7" style="left:187.20px;top:653.02px;color:#c6c6c6;">10.70.7.102</div>
<div class="t b7" style="left:396.20px;top:653.02px;color:#9b9b9b;">Last SSH: 10d ago</div>
<div class="b" style="left:606.00px;top:651.45px;width:66.00px;height:23.98px;background:#42b0ff;"></div>
<div class="t b7" style="left:616.20px;top:653.02px;color:#727272;">stor</div>
<div class="b" style="left:683.00px;top:651.45px;width:55.00px;height:23.98px;background:#42b0ff;"></div>
<div class="t" style="left:693.20px;top:653.02px;color:#0b2f52;">stg</div>
<svg class="i" style="left:12.00px;top:675.43px" width="22" height="24" viewBox="0 0 22 24"><defs><linearGradient id="dg" x1="0" y1="0" x2="1" y2="1"><stop offset="0" stop-color="#cfcfd6"/><stop offset="0.5" stop-color="#dcdce0"/><stop offset="1" stop-color="#ececec"/></linearGradient><linearGradient id="db" x1="0" y1="0" x2="1" y2="1"><stop offset="0" stop-color="#8a8a8a"/><stop offset="1" stop-color="#3a3a3a"/></linearGradient></defs><g transform="translate(-1 0)"><ellipse cx="6.8" cy="20.6" rx="4.4" ry="2.3" fill="#505050"/><ellipse cx="6.8" cy="20" rx="3" ry="1.2" fill="#7a7a7a"/><path d="M14 9.5 L21 3.5" stroke="#4c4c4c" stroke-width="2.4" stroke-linecap="round"/><path d="M15.5 11 L19 6" stroke="#6a6a6a" stroke-width="1.2" stroke-linecap="round"/><ellipse cx="10.5" cy="13.3" rx="12.5" ry="5.4" transform="rotate(45 10.5 13.3)" fill="url(#db)"/><ellipse cx="12" cy="11.6" rx="14.2" ry="4.9" transform="rotate(45 12 11.6)" fill="url(#dg)"/><path d="M2.2 4.2 Q10 13.5 19.5 22.3" stroke="#fafafa" stroke-width="1" fill="none" opacity="0.85"/><path d="M12.6 10.8 L14.6 9" stroke="#555" stroke-width="1" opacity="0.8"/></g></svg>
<div class="t b7" style="left:44.20px;top:676.97px;color:#68f2bc;">legacy</div>
<div class="t b7" style="left:187.20px;top:676.97px;color:#c6c6c6;">10.88.8.8</div>
<div class="t b7" style="left:396.20px;top:676.97px;color:#9b9b9b;">Last SSH: 1y ago</div>
<svg class="i" style="left:12.00px;top:699.40px" width="22" height="24" viewBox="0 0 22 24"><defs><linearGradient id="dg" x1="0" y1="0" x2="1" y2="1"><stop offset="0" stop-color="#cfcfd6"/><stop offset="0.5" stop-color="#dcdce0"/><stop offset="1" stop-color="#ececec"/></linearGradient><linearGradient id="db" x1="0" y1="0" x2="1" y2="1"><stop offset="0" stop-color="#8a8a8a"/><stop offset="1" stop-color="#3a3a3a"/></linearGradient></defs><g transform="translate(-1 0)"><ellipse cx="6.8" cy="20.6" rx="4.4" ry="2.3" fill="#505050"/><ellipse cx="6.8" cy="20" rx="3" ry="1.2" fill="#7a7a7a"/><path d="M14 9.5 L21 3.5" stroke="#4c4c4c" stroke-width="2.4" stroke-linecap="round"/><path d="M15.5 11 L19 6" stroke="#6a6a6a" stroke-width="1.2" stroke-linecap="round"/><ellipse cx="10.5" cy="13.3" rx="12.5" ry="5.4" transform="rotate(45 10.5 13.3)" fill="url(#db)"/><ellipse cx="12" cy="11.6" rx="14.2" ry="4.9" transform="rotate(45 12 11.6)" fill="url(#dg)"/><path d="M2.2 4.2 Q10 13.5 19.5 22.3" stroke="#fafafa" stroke-width="1" fill="none" opacity="0.85"/><path d="M12.6 10.8 L14.6 9" stroke="#555" stroke-width="1" opacity="0.8"/></g></svg>
<div class="t b7" style="left:44.20px;top:700.91px;color:#68f2bc;">api–int</div>
<div class="t b7" style="left:187.20px;top:700.91px;color:#c6c6c6;">192.168.1.23</div>
<div class="t b7" style="left:396.20px;top:700.91px;color:#9b9b9b;">Last SSH: never</div>
<svg class="i" style="left:12.00px;top:723.38px" width="22" height="24" viewBox="0 0 22 24"><defs><linearGradient id="dg" x1="0" y1="0" x2="1" y2="1"><stop offset="0" stop-color="#cfcfd6"/><stop offset="0.5" stop-color="#dcdce0"/><stop offset="1" stop-color="#ececec"/></linearGradient><linearGradient id="db" x1="0" y1="0" x2="1" y2="1"><stop offset="0" stop-color="#8a8a8a"/><stop offset="1" stop-color="#3a3a3a"/></linearGradient></defs><g transform="translate(-1 0)"><ellipse cx="6.8" cy="20.6" rx="4.4" ry="2.3" fill="#505050"/><ellipse cx="6.8" cy="20" rx="3" ry="1.2" fill="#7a7a7a"/><path d="M14 9.5 L21 3.5" stroke="#4c4c4c" stroke-width="2.4" stroke-linecap="round"/><path d="M15.5 11 L19 6" stroke="#6a6a6a" stroke-width="1.2" stroke-linecap="round"/><ellipse cx="10.5" cy="13.3" rx="12.5" ry="5.4" transform="rotate(45 10.5 13.3)" fill="url(#db)"/><ellipse cx="12" cy="11.6" rx="14.2" ry="4.9" transform="rotate(45 12 11.6)" fill="url(#dg)"/><path d="M2.2 4.2 Q10 13.5 19.5 22.3" stroke="#fafafa" stroke-width="1" fill="none" opacity="0.85"/><path d="M12.6 10.8 L14.6 9" stroke="#555" stroke-width="1" opacity="0.8"/></g></svg>
<div class="t b7" style="left:44.20px;top:724.86px;color:#68f2bc;">cass–b</div>
<div class="t b7" style="left:187.20px;top:724.86px;color:#c6c6c6;">10.30.3.62</div>
<div class="t b7" style="left:396.20px;top:724.86px;color:#9b9b9b;">Last SSH: never</div>
<svg class="i" style="left:12.00px;top:747.35px" width="22" height="24" viewBox="0 0 22 24"><defs><linearGradient id="dg" x1="0" y1="0" x2="1" y2="1"><stop offset="0" stop-color="#cfcfd6"/><stop offset="0.5" stop-color="#dcdce0"/><stop offset="1" stop-color="#ececec"/></linearGradient><linearGradient id="db" x1="0" y1="0" x2="1" y2="1"><stop offset="0" stop-color="#8a8a8a"/><stop offset="1" stop-color="#3a3a3a"/></linearGradient></defs><g transform="translate(-1 0)"><ellipse cx="6.8" cy="20.6" rx="4.4" ry="2.3" fill="#505050"/><ellipse cx="6.8" cy="20" rx="3" ry="1.2" fill="#7a7a7a"/><path d="M14 9.5 L21 3.5" stroke="#4c4c4c" stroke-width="2.4" stroke-linecap="round"/><path d="M15.5 11 L19 6" stroke="#6a6a6a" stroke-width="1.2" stroke-linecap="round"/><ellipse cx="10.5" cy="13.3" rx="12.5" ry="5.4" transform="rotate(45 10.5 13.3)" fill="url(#db)"/><ellipse cx="12" cy="11.6" rx="14.2" ry="4.9" transform="rotate(45 12 11.6)" fill="url(#dg)"/><path d="M2.2 4.2 Q10 13.5 19.5 22.3" stroke="#fafafa" stroke-width="1" fill="none" opacity="0.85"/><path d="M12.6 10.8 L14.6 9" stroke="#555" stroke-width="1" opacity="0.8"/></g></svg>
<div class="t b7" style="left:44.20px;top:748.80px;color:#68f2bc;">ci–alt</div>
<div class="t b7" style="left:187.20px;top:748.80px;color:#c6c6c6;">10.50.5.82</div>
<div class="t b7" style="left:396.20px;top:748.80px;color:#9b9b9b;">Last SSH: never</div>
<svg class="i" style="left:12.00px;top:771.33px" width="22" height="24" viewBox="0 0 22 24"><defs><linearGradient id="dg" x1="0" y1="0" x2="1" y2="1"><stop offset="0" stop-color="#cfcfd6"/><stop offset="0.5" stop-color="#dcdce0"/><stop offset="1" stop-color="#ececec"/></linearGradient><linearGradient id="db" x1="0" y1="0" x2="1" y2="1"><stop offset="0" stop-color="#8a8a8a"/><stop offset="1" stop-color="#3a3a3a"/></linearGradient></defs><g transform="translate(-1 0)"><ellipse cx="6.8" cy="20.6" rx="4.4" ry="2.3" fill="#505050"/><ellipse cx="6.8" cy="20" rx="3" ry="1.2" fill="#7a7a7a"/><path d="M14 9.5 L21 3.5" stroke="#4c4c4c" stroke-width="2.4" stroke-linecap="round"/><path d="M15.5 11 L19 6" stroke="#6a6a6a" stroke-width="1.2" stroke-linecap="round"/><ellipse cx="10.5" cy="13.3" rx="12.5" ry="5.4" transform="rotate(45 10.5 13.3)" fill="url(#db)"/><ellipse cx="12" cy="11.6" rx="14.2" ry="4.9" transform="rotate(45 12 11.6)" fill="url(#dg)"/><path d="M2.2 4.2 Q10 13.5 19.5 22.3" stroke="#fafafa" stroke-width="1" fill="none" opacity="0.85"/><path d="M12.6 10.8 L14.6 9" stroke="#555" stroke-width="1" opacity="0.8"/></g></svg>
<div class="t b7" style="left:44.20px;top:772.75px;color:#68f2bc;">stor–arch</div>
<div class="t b7" style="left:187.20px;top:772.75px;color:#c6c6c6;">10.70.7.103</div>
<div class="t b7" style="left:396.20px;top:772.75px;color:#9b9b9b;">Last SSH: never</div>
<svg class="i" style="left:12.00px;top:795.30px" width="22" height="24" viewBox="0 0 22 24"><defs><linearGradient id="dg" x1="0" y1="0" x2="1" y2="1"><stop offset="0" stop-color="#cfcfd6"/><stop offset="0.5" stop-color="#dcdce0"/><stop offset="1" stop-color="#ececec"/></linearGradient><linearGradient id="db" x1="0" y1="0" x2="1" y2="1"><stop offset="0" stop-color="#8a8a8a"/><stop offset="1" stop-color="#3a3a3a"/></linearGradient></defs><g transform="translate(-1 0)"><ellipse cx="6.8" cy="20.6" rx="4.4" ry="2.3" fill="#505050"/><ellipse cx="6.8" cy="20" rx="3" ry="1.2" fill="#7a7a7a"/><path d="M14 9.5 L21 3.5" stroke="#4c4c4c" stroke-width="2.4" stroke-linecap="round"/><path d="M15.5 11 L19 6" stroke="#6a6a6a" stroke-width="1.2" stroke-linecap="round"/><ellipse cx="10.5" cy="13.3" rx="12.5" ry="5.4" transform="rotate(45 10.5 13.3)" fill="url(#db)"/><ellipse cx="12" cy="11.6" rx="14.2" ry="4.9" transform="rotate(45 12 11.6)" fill="url(#dg)"/><path d="M2.2 4.2 Q10 13.5 19.5 22.3" stroke="#fafafa" stroke-width="1" fill="none" opacity="0.85"/><path d="M12.6 10.8 L14.6 9" stroke="#555" stroke-width="1" opacity="0.8"/></g></svg>
<div class="t b7" style="left:44.20px;top:796.69px;color:#68f2bc;">web–test</div>
<div class="t b7" style="left:187.20px;top:796.69px;color:#c6c6c6;">192.168.2.32</div>
<div class="t b7" style="left:396.20px;top:796.69px;color:#9b9b9b;">Last SSH: never</div>
<div class="t b7" style="left:1144.20px;top:102.29px;color:#dcdcdc;">db–main</div>
<div class="t b7" style="left:1144.20px;top:150.17px;color:#e2e2e2;">Host: </div>
<div class="t b7" style="left:1210.20px;top:150.17px;color:#68f2bc;">10.0.0.10</div>
<div class="t b7" style="left:1144.20px;top:174.12px;color:#e2e2e2;">User: </div>
<div class="t b7" style="left:1210.20px;top:174.12px;color:#68f2bc;">postgres</div>
<div class="t b7" style="left:1144.20px;top:198.06px;color:#e2e2e2;">Port: </div>
<div class="t b7" style="left:1210.20px;top:198.06px;color:#68f2bc;">22</div>
<div class="t b7" style="left:1144.20px;top:222.01px;color:#e2e2e2;">Key:  </div>
<div class="t b7" style="left:1210.20px;top:222.01px;color:#68f2bc;">~/.ssh/id_rsa</div>
<div class="t b7" style="left:1144.20px;top:245.95px;color:#e2e2e2;">Tags: </div>
<div class="b" style="left:1211.00px;top:243.88px;width:55.00px;height:23.98px;background:#42b0ff;"></div>
<div class="t b7" style="left:1221.20px;top:245.95px;color:#727272;">ovh</div>
<div class="b" style="left:1277.00px;top:243.88px;width:66.00px;height:23.98px;background:#42b0ff;"></div>
<div class="t" style="left:1287.20px;top:245.95px;color:#0b2f52;">prod</div>
<div class="b" style="left:1354.00px;top:243.88px;width:44.00px;height:23.98px;background:#42b0ff;"></div>
<div class="t" style="left:1364.20px;top:245.95px;color:#0b2f52;">db</div>
<div class="t" style="left:1144.20px;top:269.90px;color:#dcdcdc;">Pinned: </div>
<div class="t" style="left:1232.20px;top:269.90px;color:#68f2bc;">true</div>
<div class="t" style="left:1144.20px;top:293.85px;color:#dcdcdc;">Last SSH: 2025–08–30 12:43:06</div>
<div class="t" style="left:1144.20px;top:317.79px;color:#dcdcdc;">SSH Count: </div>
<div class="t" style="left:1265.20px;top:317.79px;color:#68f2bc;">58</div>
<div class="t b7" style="left:1144.20px;top:365.68px;color:#dcdcdc;">Commands:</div>
<div class="t b7" style="left:1166.20px;top:389.62px;color:#dcdcdc;">Enter: SSH connect</div>
<div class="t b7" style="left:1166.20px;top:413.57px;color:#dcdcdc;">c: Copy SSH command</div>
<div class="t b7" style="left:1166.20px;top:437.52px;color:#dcdcdc;">g: Ping server</div>
<div class="t b7" style="left:1166.20px;top:461.46px;color:#dcdcdc;">r: Refresh list</div>
<div class="t b7" style="left:1166.20px;top:485.41px;color:#dcdcdc;">a: Add new server</div>
<div class="t b7" style="left:1166.20px;top:509.35px;color:#dcdcdc;">e: Edit entry</div>
<div class="t b7" style="left:1166.20px;top:533.30px;color:#dcdcdc;">t: Edit tags</div>
<div class="t b7" style="left:1166.20px;top:557.24px;color:#dcdcdc;">d: Delete entry</div>
<div class="t b7" style="left:1166.20px;top:581.19px;color:#dcdcdc;">p: Pin/Unpin</div>
<div class="b" style="left:0.00px;top:25.00px;width:1.00px;height:1010.00px;background:#080808;"></div>
<div class="b" style="left:0.00px;top:1011.08px;width:1892.00px;height:23.98px;background:#262626;"></div>
<div class="b" style="left:0.00px;top:1035.05px;width:1892.00px;height:4.95px;background:#020a12;"></div>
<div class="t" style="left:308.20px;top:1012.20px;color:#6cf0c0;">↑↓</div>
<div class="t" style="left:341.20px;top:1012.20px;color:#d8d8d8;">Navigate</div>
<div class="t" style="left:451.20px;top:1012.20px;color:#d8d8d8;">•</div>
<div class="t" style="left:473.20px;top:1012.20px;color:#6cf0c0;">Enter</div>
<div class="t" style="left:539.20px;top:1012.20px;color:#d8d8d8;">SSH</div>
<div class="t" style="left:594.20px;top:1012.20px;color:#d8d8d8;">•</div>
<div class="t" style="left:616.20px;top:1012.20px;color:#6cf0c0;">c</div>
<div class="t" style="left:638.20px;top:1012.20px;color:#d8d8d8;">Copy SSH</div>
<div class="t" style="left:748.20px;top:1012.20px;color:#d8d8d8;">•</div>
<div class="t" style="left:770.20px;top:1012.20px;color:#6cf0c0;">a</div>
<div class="t" style="left:792.20px;top:1012.20px;color:#d8d8d8;">Add</div>
<div class="t" style="left:847.20px;top:1012.20px;color:#d8d8d8;">•</div>
<div class="t" style="left:869.20px;top:1012.20px;color:#6cf0c0;">e</div>
<div class="t" style="left:891.20px;top:1012.20px;color:#d8d8d8;">Edit</div>
<div class="t" style="left:957.20px;top:1012.20px;color:#d8d8d8;">•</div>
<div class="t" style="left:979.20px;top:1012.20px;color:#6cf0c0;">g</div>
<div class="t" style="left:1001.20px;top:1012.20px;color:#d8d8d8;">Ping</div>
<div class="t" style="left:1067.20px;top:1012.20px;color:#d8d8d8;">•</div>
<div class="t" style="left:1089.20px;top:1012.20px;color:#6cf0c0;">d</div>
<div class="t" style="left:1111.20px;top:1012.20px;color:#d8d8d8;">Delete</div>
<div class="t" style="left:1199.20px;top:1012.20px;color:#d8d8d8;">•</div>
<div class="t" style="left:1221.20px;top:1012.20px;color:#6cf0c0;">p</div>
<div class="t" style="left:1243.20px;top:1012.20px;color:#d8d8d8;">Pin/Unpin</div>
<div class="t" style="left:1364.20px;top:1012.20px;color:#d8d8d8;">•</div>
<div class="t" style="left:1386.20px;top:1012.20px;color:#6cf0c0;">/</div>
<div class="t" style="left:1408.20px;top:1012.20px;color:#d8d8d8;">Search</div>
<div class="t" style="left:1496.20px;top:1012.20px;color:#d8d8d8;">•</div>
<div class="t" style="left:1518.20px;top:1012.20px;color:#6cf0c0;">q</div>
<div class="t" style="left:1540.20px;top:1012.20px;color:#d8d8d8;">Quit</div>
</div></body></html>
